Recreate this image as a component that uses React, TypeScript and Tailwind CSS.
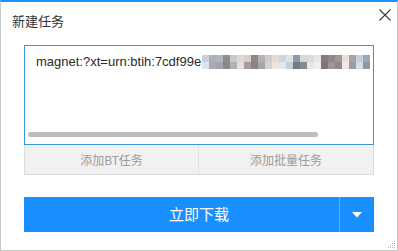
// blurred tail of the magnet link: two rows of mosaic blocks
const mosaicTop = [
  "#c4d2e0", "#aeb0bb", "#b4b4bc", "#8e8e90", "#cacaca", "#dcd8d4", "#d4d0cc", "#8c8688",
  "#b8b0b0", "#cccccf", "#ead9d0", "#cbd6e2", "#dde2e8", "#8a9aae", "#d6d6d8", "#d3dbe3",
  "#ece4e4", "#857c80", "#8c8890", "#9a9a9c", "#eedfd6", "#a4a4ac", "#c6d0da", "#9aa8ba",
];
const mosaicBottom = [
  "#dce4ec", "#a8aab4", "#a4a4ac", "#8a8a8c", "#b2b2b4", "#e4e0dc", "#a49c98", "#8a8486",
  "#ada4a4", "#d4d4d8", "#f0e4dc", "#dfe6ee", "#c8ced6", "#727a84", "#888888", "#e2e8ee",
  "#f2ecec", "#7d7478", "#9a969c", "#8a8a8a", "#f4e8e2", "#9c9ca4", "#d4dce6", "#8898ac",
];

function Mosaic() {
  return (
    <div className="ml-px flex flex-col">
      <div className="flex">
        {mosaicTop.map((c, i) => (
          <span key={i} className="h-[7px] w-[7px]" style={{ backgroundColor: c }} />
        ))}
      </div>
      <div className="flex">
        {mosaicBottom.map((c, i) => (
          <span key={i} className="h-[7px] w-[7px]" style={{ backgroundColor: c }} />
        ))}
      </div>
    </div>
  );
}

function ResizeGrip() {
  return (
    <svg width="9" height="9" viewBox="0 0 9 9" className="absolute bottom-px right-px">
      <g fill="#b5b5b5">
        <rect x="7" y="1" width="1" height="1" />
        <rect x="5" y="3" width="1" height="1" />
        <rect x="7" y="3" width="1" height="1" />
        <rect x="3" y="5" width="1" height="1" />
        <rect x="5" y="5" width="1" height="1" />
        <rect x="7" y="5" width="1" height="1" />
        <rect x="1" y="7" width="1" height="1" />
        <rect x="3" y="7" width="1" height="1" />
        <rect x="5" y="7" width="1" height="1" />
        <rect x="7" y="7" width="1" height="1" />
      </g>
    </svg>
  );
}

export default function App() {
  return (
    <div
      className="relative h-[251px] w-[398px] border border-t-2 border-[#c8c8c8] border-t-[#1e90ff] bg-white"
      style={{ fontFamily: '"Liberation Sans", "Noto Sans CJK SC", sans-serif' }}
    >
      <div className="flex h-[43px] items-start justify-between pl-[11px] pr-[6px]">
        <h1
          className="pt-[9px] text-[13px] leading-[20px] text-[#333]"
          style={{ fontFamily: '"Noto Sans CJK SC", sans-serif' }}
        >
          新建任务
        </h1>
        <svg width="12" height="12" viewBox="0 0 12 12" className="mt-[7px]">
          <path d="M0.5 0.5 L11.5 11.5 M11.5 0.5 L0.5 11.5" stroke="#3a3a3a" strokeWidth="1.1" />
        </svg>
      </div>

      <div className="w-[350px] pl-[23px]">
        <div className="flex h-[100px] w-[350px] flex-col justify-between border border-[#3a94d8] bg-white">
          <div className="flex items-center pl-[11px] pt-[8px]">
            <span className="text-[13px] leading-[16px] text-[#2a2a2a]">magnet:?xt=urn:btih:7cdf99e</span>
            <Mosaic />
          </div>
          <div className="mb-[7px] ml-[3px] h-[5px] w-[290px] rounded-full bg-[#bdbdbd]" />
        </div>

        <div
          className="grid h-[30px] w-[350px] grid-cols-2 border-x border-b border-[#dcdcdc] bg-[#f1f1f1] text-[12px] text-[#9c9c9c]"
          style={{ fontFamily: '"Noto Sans CJK SC", sans-serif' }}
        >
          <button className="flex items-center justify-center border-r border-[#e2e2e2]">添加BT任务</button>
          <button className="flex items-center justify-center">添加批量任务</button>
        </div>

        <div className="mt-[22px] flex h-[35px] w-[350px] bg-[#1a8fff] text-white">
          <button
            className="flex flex-1 items-center justify-center pl-[35px] text-[15px]"
            style={{ fontFamily: '"Noto Sans CJK SC", sans-serif' }}
          >
            立即下载
          </button>
          <button className="flex w-[35px] items-center justify-center border-l border-[#5cb0ff]">
            <svg width="10" height="6" viewBox="0 0 10 6">
              <path d="M0 0 H10 L5 5.5 Z" fill="#fff" />
            </svg>
          </button>
        </div>
      </div>

      <ResizeGrip />
    </div>
  );
}
